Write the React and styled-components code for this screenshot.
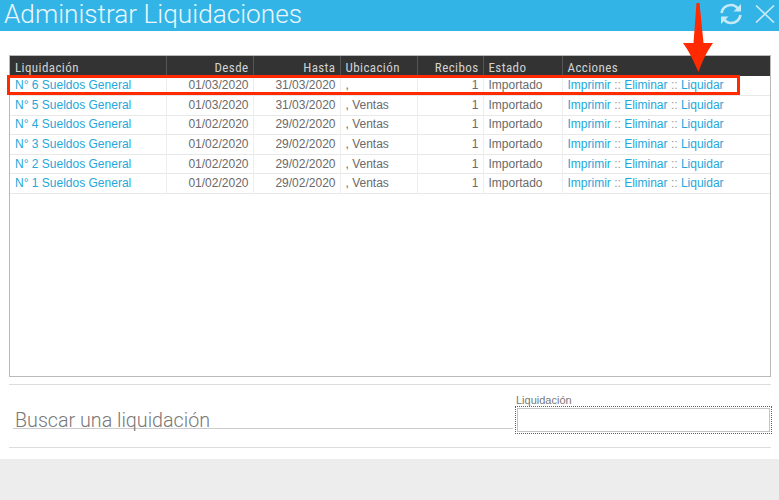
import React from "react";
import styled, { createGlobalStyle } from "styled-components";

const GlobalStyle = createGlobalStyle`
  html, body {
    margin: 0;
    padding: 0;
    background: #fff;
    font-family: "Liberation Sans", Arial, sans-serif;
  }
`;

const Page = styled.div`
  position: relative;
  width: 779px;
  height: 500px;
  overflow: hidden;
  background: #fff;
  display: flex;
  flex-direction: column;
`;

const TitleBar = styled.div`
  height: 31px;
  flex: none;
  background: #33b4e6;
  display: flex;
  align-items: center;
  justify-content: space-between;
  padding: 0 4px 0 4px;
  overflow: hidden;
`;

const Title = styled.h1`
  margin: 0;
  font-family: Roboto, sans-serif;
  font-weight: 300;
  font-size: 26.2px;
  color: #e9f7fc;
  line-height: 29px;
  margin-top: -2px;
`;

const TitleIcons = styled.div`
  display: flex;
  align-items: center;
  gap: 13px;
  margin-top: -3px;
  color: #c5e9f7;
`;

const TableBox = styled.div`
  margin: 24px 8px 0 9px;
  height: 322px;
  flex: none;
  box-sizing: border-box;
  border: 1px solid #b9b9b9;
  background: #fff;
`;

const Table = styled.table`
  width: 100%;
  border-collapse: collapse;
  table-layout: fixed;
  font-size: 12px;
`;

const HeadCell = styled.th`
  height: 20px;
  padding: ${(p) => (p.$right ? "2px 4px 0 5px" : "2px 5px 0")};
  box-sizing: border-box;
  background: #333;
  color: #d2d2d2;
  font-family: "Roboto Condensed", "Liberation Sans Narrow", Roboto, sans-serif;
  font-weight: 400;
  font-size: 13px;
  letter-spacing: 0.4px;
  text-align: ${(p) => (p.$right ? "right" : "left")};
  border-left: 1px solid #555;
  &:first-child {
    border-left: none;
  }
`;

const Row = styled.tr`
  height: 19.6px;
  border-bottom: 1px solid #e8e8e8;
`;

const Cell = styled.td`
  padding: ${(p) => (p.$right ? "0 4px 1px 5px" : "0 5px 1px")};
  color: #6a6a6a;
  white-space: nowrap;
  overflow: hidden;
  text-align: ${(p) => (p.$right ? "right" : "left")};
  border-left: 1px solid #eee;
  &:first-child {
    border-left: none;
  }
`;

const LinkText = styled.a`
  color: #24a7da;
  text-decoration: none;
`;

const Sep = styled.span`
  color: #999;
`;

const Rule = styled.hr`
  margin: ${(p) => (p.$top ? "7px" : "0")} 8px 0 9px;
  border: none;
  border-top: 1px solid #ddd;
  flex: none;
`;

const SearchArea = styled.div`
  height: 62px;
  flex: none;
  box-sizing: border-box;
  display: flex;
  align-items: flex-end;
  padding: 0 7px 18px 13px;
`;

const SearchLabel = styled.div`
  flex: 1;
  height: 24px;
  box-sizing: border-box;
  border-bottom: 1px solid #ccc;
  padding-left: 2px;
  font-family: Roboto, sans-serif;
  font-weight: 300;
  font-size: 19.7px;
  line-height: 32px;
  color: #777;
  white-space: nowrap;
`;

const FieldWrap = styled.div`
  width: 257px;
  margin-left: 2px;
  margin-bottom: -5px;
`;

const FieldLabel = styled.label`
  display: block;
  font-size: 11px;
  line-height: 12px;
  padding-left: 1px;
  color: #777;
`;

const FieldInput = styled.div`
  height: 28px;
  box-sizing: border-box;
  outline: 1px dotted #3c6f78;
  outline-offset: -1px;
  padding: 2px;
`;

const FieldInner = styled.div`
  height: 100%;
  box-sizing: border-box;
  border: 1px solid #c4c4c4;
`;

const Footer = styled.div`
  margin-top: 11px;
  flex: 1;
  background: #ededed;
`;

// red annotations drawn over the screenshot
const Highlight = styled.div`
  position: absolute;
  left: 7px;
  top: 75px;
  width: 733px;
  height: 20px;
  box-sizing: border-box;
  border: 3px solid #ff2a00;
`;

const Arrow = styled.svg`
  position: absolute;
  left: 680px;
  top: 2px;
`;

const columns = [
  { name: "Liquidación", width: 156 },
  { name: "Desde", width: 87, right: true },
  { name: "Hasta", width: 87, right: true },
  { name: "Ubicación", width: 77 },
  { name: "Recibos", width: 66, right: true },
  { name: "Estado", width: 79 },
  { name: "Acciones" },
];

const rows = [
  { n: 6, from: "01/03/2020", to: "31/03/2020", place: "," },
  { n: 5, from: "01/03/2020", to: "31/03/2020", place: ", Ventas" },
  { n: 4, from: "01/02/2020", to: "29/02/2020", place: ", Ventas" },
  { n: 3, from: "01/02/2020", to: "29/02/2020", place: ", Ventas" },
  { n: 2, from: "01/02/2020", to: "29/02/2020", place: ", Ventas" },
  { n: 1, from: "01/02/2020", to: "29/02/2020", place: ", Ventas" },
];

function RefreshIcon() {
  return (
    <svg width="22" height="22" viewBox="0 0 22 22" fill="none" stroke="currentColor" strokeWidth="2.6">
      <path d="M1.500 10 C2 5.500 6 2 11 2 C14 2 16.500 3.500 18 6" />
      <path d="M20.500 12 C20 16.500 16 20 11 20 C8 20 5.500 18.500 4 16" />
      <path d="M21 1 V8.500 H13.500 Z" fill="currentColor" stroke="none" />
      <path d="M1 21 V13.500 H8.500 Z" fill="currentColor" stroke="none" />
    </svg>
  );
}

function CloseIcon() {
  return (
    <svg width="20" height="18" viewBox="0 0 20 18" fill="none" stroke="currentColor" strokeWidth="1.7">
      <path d="M1 0.500 L19 17.500 M19 0.500 L1 17.500" />
    </svg>
  );
}

function App() {
  return (
    <Page>
      <GlobalStyle />
      <TitleBar>
        <Title>Administrar Liquidaciones</Title>
        <TitleIcons>
          <RefreshIcon />
          <CloseIcon />
        </TitleIcons>
      </TitleBar>
      <TableBox>
        <Table>
          <colgroup>
            {columns.map((c) => (
              <col key={c.name} style={c.width ? { width: c.width } : undefined} />
            ))}
          </colgroup>
          <thead>
            <tr>
              {columns.map((c) => (
                <HeadCell key={c.name} $right={c.right}>
                  {c.name}
                </HeadCell>
              ))}
            </tr>
          </thead>
          <tbody>
            {rows.map((r) => (
              <Row key={r.n}>
                <Cell>
                  <LinkText>N° {r.n} Sueldos General</LinkText>
                </Cell>
                <Cell $right>{r.from}</Cell>
                <Cell $right>{r.to}</Cell>
                <Cell>{r.place}</Cell>
                <Cell $right>1</Cell>
                <Cell>Importado</Cell>
                <Cell>
                  <LinkText>Imprimir</LinkText> <Sep>::</Sep> <LinkText>Eliminar</LinkText> <Sep>::</Sep>{" "}
                  <LinkText>Liquidar</LinkText>
                </Cell>
              </Row>
            ))}
          </tbody>
        </Table>
      </TableBox>
      <Rule $top />
      <SearchArea>
        <SearchLabel>Buscar una liquidación</SearchLabel>
        <FieldWrap>
          <FieldLabel>Liquidación</FieldLabel>
          <FieldInput>
            <FieldInner />
          </FieldInput>
        </FieldWrap>
      </SearchArea>
      <Rule />
      <Footer />
      <Highlight />
      <Arrow width="36" height="72" viewBox="0 0 36 72">
        <path d="M16.500 1 L19.500 1 L23.500 41 L33 41 C27 49 22 60 18.500 70 C14 60 9 49 3 41 L13.500 41 Z" fill="#ff2a00" />
      </Arrow>
    </Page>
  );
}

export default App;
